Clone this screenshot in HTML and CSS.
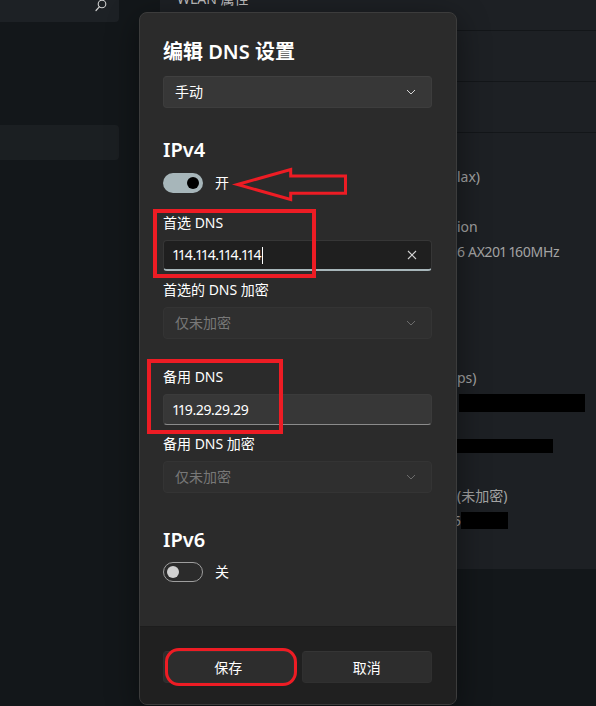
FILE: index.html
```html
<!DOCTYPE html>
<html lang="zh-CN">
<head>
<meta charset="utf-8">
<title>编辑 DNS 设置</title>
<link rel="stylesheet" href="styles.css">
</head>
<body>
<div class="app">
  <aside class="nav">
    <div class="search">
      <svg class="search-icon" width="12" height="14" viewBox="0 0 12 14"><circle cx="7" cy="5" r="3.8" fill="none" stroke="#d0d0d0" stroke-width="1.1"/><line x1="4.3" y1="7.8" x2="1" y2="11.5" stroke="#d0d0d0" stroke-width="1.2" stroke-linecap="round"/></svg>
    </div>
    <div class="nav-item"></div>
  </aside>
  <main class="main">
    <div class="card">
      <div class="row row-head"><span class="crumb">WLAN 属性</span></div>
      <div class="row row-mid"></div>
      <div class="row row-mid"></div>
      <div class="row props">
        <div class="pv pv1">lax)</div>
        <div class="pv pv2">ion</div>
        <div class="pv pv3">6 AX201 160MHz</div>
        <div class="pv pv4">ps)</div>
        <div class="redact r1"></div>
        <div class="redact r2"></div>
        <div class="pv pv7">(未加密)</div>
        <div class="pv8"><span class="pv8-char">5</span><span class="redact r3"></span></div>
      </div>
    </div>
  </main>
</div>

<div class="dialog">
  <div class="dlg-body">
    <div class="title">编辑 DNS 设置</div>
    <div class="select sel-first"><span>手动</span>
      <svg class="chev" width="10" height="6" viewBox="0 0 10 6"><polyline points="1,1 5,5 9,1" fill="none" stroke="#d6d6d6" stroke-width="1"/></svg>
    </div>

    <div class="sec sec4">IPv4</div>
    <div class="toggle-row tr4"><span class="toggle on"><span class="knob"></span></span><span class="tlabel">开</span></div>

    <div class="field fa">
      <div class="label">首选 DNS</div>
      <div class="input focused"><span class="val">114.114.114.114</span><span class="caret"></span>
        <svg class="clear" width="10" height="10" viewBox="0 0 10 10"><path d="M1 1L9 9M9 1L1 9" stroke="#d0d0d0" stroke-width="1.1"/></svg>
      </div>
    </div>
    <div class="field fs">
      <div class="label">首选的 DNS 加密</div>
      <div class="select disabled"><span>仅未加密</span>
        <svg class="chev" width="10" height="6" viewBox="0 0 10 6"><polyline points="1,1 5,5 9,1" fill="none" stroke="#6c6c6c" stroke-width="1"/></svg>
      </div>
    </div>
    <div class="field fl">
      <div class="label">备用 DNS</div>
      <div class="input"><span class="val">119.29.29.29</span></div>
    </div>
    <div class="field fs">
      <div class="label">备用 DNS 加密</div>
      <div class="select disabled"><span>仅未加密</span>
        <svg class="chev" width="10" height="6" viewBox="0 0 10 6"><polyline points="1,1 5,5 9,1" fill="none" stroke="#6c6c6c" stroke-width="1"/></svg>
      </div>
    </div>

    <div class="sec sec6">IPv6</div>
    <div class="toggle-row tr6"><span class="toggle off"><span class="knob"></span></span><span class="tlabel">关</span></div>
  </div>
  <div class="dlg-foot">
    <button class="btn">保存</button>
    <button class="btn">取消</button>
  </div>
</div>

<div class="mark box1"></div>
<div class="mark box2"></div>
<div class="mark oval"></div>
<svg class="arrow" width="122" height="42" viewBox="0 0 122 42"><polygon points="7.5,21.5 60.7,6.5 60.7,13 115.5,13 115.5,30.3 60.7,30.3 60.7,36.5" fill="none" stroke="#ed1c24" stroke-width="3" stroke-linejoin="miter" stroke-miterlimit="10"/></svg>
</body>
</html>
```

FILE: styles.css
```css
* { box-sizing: border-box; }

body {
  margin: 0;
  width: 596px;
  height: 706px;
  overflow: hidden;
  position: relative;
  background: #13171a;
  color: #ffffff;
  font-family: "Noto Sans", "Noto Sans CJK SC", sans-serif;
  font-size: 14px;
  line-height: 20px;
}

.app {
  display: flex;
  height: 706px;
}

/* left navigation */
.nav {
  width: 118px;
  flex: none;
  display: flex;
  flex-direction: column;
}
.search {
  margin: -10px 0 0 -10px;
  width: 129px;
  height: 32px;
  background: #1d2125;
  border-radius: 4px;
  position: relative;
  display: flex;
  justify-content: flex-end;
  align-items: flex-end;
  padding: 0 12px 9px 0;
}
.nav-item {
  margin: 103px 0 0 -10px;
  width: 129px;
  height: 35px;
  background: #1b1f22;
  border-radius: 4px;
}

/* main content behind the dialog */
.main {
  flex: 1;
  margin-left: 42px;
}
.card {
  height: 569px;
  background: #1d2024;
  display: flex;
  flex-direction: column;
}
.row {
  border-bottom: 1px solid #131619;
}
.row-head {
  height: 31px;
  padding-left: 17px;
}
.crumb {
  display: block;
  margin-top: -11px;
  color: #bdbdbd;
}
.row-mid {
  height: 51px;
}
.props {
  flex: 1;
  border-bottom: none;
  padding-left: 297px;
  display: flex;
  flex-direction: column;
  color: #a3a3a3;
  font-variant-numeric: proportional-nums;
}
.pv { height: 20px; white-space: nowrap; }
.pv1 { margin-top: 34px; }
.pv2 { margin-top: 30px; }
.pv3 { margin-top: 5px; letter-spacing: -0.3px; }
.pv4 { margin-top: 106px; }
.redact { background: #000; display: block; }
.r1 { margin: 6px 0 0 2px; width: 126px; height: 18px; }
.r2 { margin-top: 27px; width: 96px; height: 14px; }
.pv7 { margin-top: 33px; }
.pv8 {
  margin-top: 6px;
  display: flex;
  height: 17px;
  align-items: center;
}
.pv8-char { margin-left: -4px; color: #a3a3a3; }
.r3 { width: 47px; height: 17px; }

/* dialog */
.dialog {
  position: absolute;
  left: 139px;
  top: 12px;
  width: 318px;
  height: 693px;
  background: #2b2b2b;
  border: 1px solid #3c3c3c;
  border-radius: 8px;
  box-shadow: 0 8px 32px rgba(0, 0, 0, 0.45);
  display: flex;
  flex-direction: column;
  overflow: hidden;
}
.dlg-body {
  padding: 25px 24px 44px 23px;
  display: flex;
  flex-direction: column;
}
.title {
  font-size: 20px;
  line-height: 28px;
  font-weight: 600;
}
.select {
  height: 32px;
  background: #373737;
  border: 1px solid #3d3d3d;
  border-top-color: #404040;
  border-radius: 4px;
  display: flex;
  align-items: center;
  justify-content: space-between;
  padding: 0 15px 0 11px;
  color: #ffffff;
}
.sel-first { margin-top: 10px; }
.select.disabled {
  background: #2f2f2f;
  border-color: #343434;
  color: #787878;
}
.chev { display: block; }

.sec {
  font-size: 20px;
  line-height: 28px;
  font-weight: 600;
}
.sec4 { margin-top: 28px; }
.sec6 { margin-top: 33px; }

.toggle-row {
  display: flex;
  align-items: center;
  height: 20px;
  gap: 12px;
}
.tr4 { margin-top: 9px; }
.tr6 { margin-top: 8px; }
.toggle {
  width: 40px;
  height: 20px;
  border-radius: 10px;
  display: flex;
  align-items: center;
  padding: 0 4px;
}
.toggle.on {
  background: #a7b6ba;
  justify-content: flex-end;
}
.toggle.off {
  border: 1px solid #9e9e9e;
  padding: 0 3px;
}
.knob {
  width: 12px;
  height: 12px;
  border-radius: 50%;
}
.toggle.on .knob { background: #000; }
.toggle.off .knob { background: #d0d0d0; }
.tlabel { line-height: 20px; }

.field {
  display: flex;
  flex-direction: column;
}
.fa { margin-top: 20px; }
.fs { margin-top: 9px; }
.fl { margin-top: 28px; }
.label {
  line-height: 20px;
  margin-bottom: 7px;
}
.input {
  height: 31px;
  background: #373737;
  border: 1px solid #3b3b3b;
  border-bottom: 1px solid #8b8b8b;
  border-radius: 4px;
  display: flex;
  align-items: center;
  padding: 0 14px 0 9px;
}
.input.focused {
  background: #1f1f1f;
  border-color: #363636;
  border-bottom: 2px solid #a7b6ba;
}
.val {
  font-family: "Noto Sans", "Noto Sans CJK SC", sans-serif;
  font-variant-numeric: proportional-nums;
  letter-spacing: -0.3px;
}
.caret {
  width: 1px;
  height: 17px;
  background: #ffffff;
  margin-left: 1px;
}
.clear { margin-left: auto; display: block; }

.dlg-foot {
  flex: 1;
  background: #202020;
  border-top: 1px solid #1d1d1d;
  padding: 24px 24px 0 23px;
  display: flex;
  gap: 8px;
  align-items: flex-start;
}
.btn {
  flex: 1;
  height: 32px;
  background: #2d2d2d;
  border: 1px solid #303030;
  border-top-color: #353535;
  border-radius: 4px;
  color: #ffffff;
  font-family: "Noto Sans", "Noto Sans CJK SC", sans-serif;
  font-size: 14px;
}

/* red annotations */
.mark {
  position: absolute;
  border: 4px solid #ed1c24;
}
.box1 { left: 153px; top: 209px; width: 163px; height: 69px; }
.box2 { left: 147px; top: 359px; width: 136px; height: 75px; }
.oval {
  left: 165px;
  top: 648px;
  width: 132px;
  height: 38px;
  border-width: 3.5px;
  border-radius: 14px;
}
.arrow {
  position: absolute;
  left: 230px;
  top: 163px;
}
```
